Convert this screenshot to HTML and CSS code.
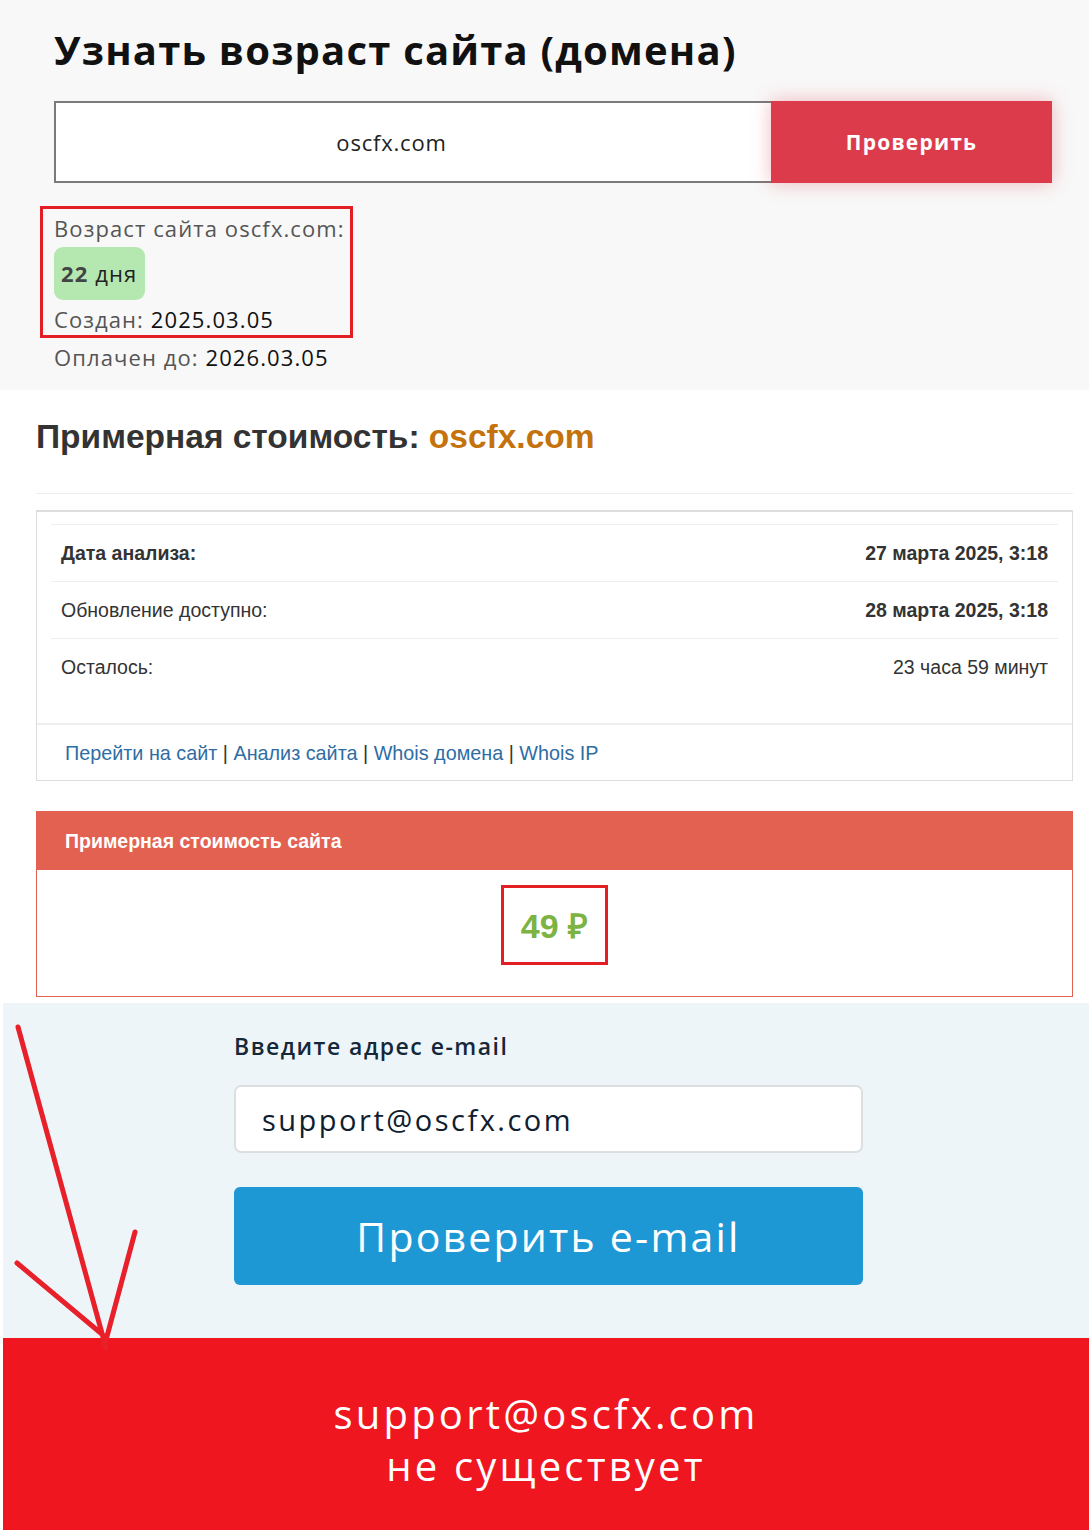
FILE: index.html
```html
<!DOCTYPE html>
<html lang="ru">
<head>
    <meta charset="UTF-8">
    <meta name="viewport" content="width=device-width, initial-scale=1.0">
    <title>Возраст сайта oscfx.com</title>
    <link rel="stylesheet" href="styles.css">
</head>
<body>
    <section class="age">
        <h1>Узнать возраст сайта (домена)</h1>
        <div class="check-form">
            <div class="domain-input">oscfx.com</div>
            <button class="check-btn">Проверить</button>
        </div>
        <div class="result mark">
            <p>Возраст сайта oscfx.com:</p>
            <div class="badge"><b>22</b> дня</div>
            <p>Создан: <span class="val">2025.03.05</span></p>
        </div>
        <p class="paid">Оплачен до: <span class="val">2026.03.05</span></p>
    </section>

    <section class="price">
        <h2>Примерная стоимость: <span class="domain">oscfx.com</span></h2>
        <hr>
        <div class="panel">
            <div class="panel-body">
                <table class="info">
                    <tr class="strong">
                        <td>Дата анализа:</td>
                        <td class="right">27 марта 2025, 3:18</td>
                    </tr>
                    <tr>
                        <td>Обновление доступно:</td>
                        <td class="right"><b>28 марта 2025, 3:18</b></td>
                    </tr>
                    <tr>
                        <td>Осталось:</td>
                        <td class="right">23 часа 59 минут</td>
                    </tr>
                </table>
            </div>
            <div class="panel-footer">
                <a href="#">Перейти на сайт</a> | <a href="#">Анализ сайта</a> | <a href="#">Whois домена</a> | <a href="#">Whois IP</a>
            </div>
        </div>

        <div class="panel panel-red">
            <div class="panel-heading">Примерная стоимость сайта</div>
            <div class="panel-price">
                <div class="cost mark">49 ₽</div>
            </div>
        </div>
    </section>

    <section class="email">
        <div class="email-form">
            <label>Введите адрес e-mail</label>
            <div class="email-input">support@oscfx.com</div>
            <button class="email-btn">Проверить e-mail</button>
        </div>
    </section>

    <section class="alert">
        <p>support@oscfx.com</p>
        <p>не существует</p>
    </section>

    <svg class="arrow" width="160" height="360" viewBox="0 0 160 360">
        <path d="M18 19 L106 340 M17 255 L103 327 M135 224 L106 332" fill="none" stroke="#e8202a" stroke-width="5" stroke-linecap="round"/>
    </svg>
</body>
</html>
```

FILE: styles.css
```css
body {
    margin: 0;
    padding: 0;
    background: #ffffff;
    font-family: 'Open Sans', 'Liberation Sans', sans-serif;
    position: relative;
}

p {
    margin: 0;
}

/* --- возраст домена --- */

.age {
    background: #f8f8f8;
    padding: 22px 0 19px 54px;
}

.age h1 {
    margin: 0;
    font-size: 40px;
    font-weight: 700;
    color: #111;
    line-height: 56px;
    letter-spacing: 1.2px;
}

.check-form {
    display: flex;
    margin-top: 23px;
    width: 998px;
}

.domain-input {
    width: 671px;
    height: 78px;
    border: 2px solid #7a7a7a;
    border-right: none;
    padding-right: 44px;
    background: #fff;
    display: flex;
    align-items: center;
    justify-content: center;
    font-size: 22px;
    color: #222;
    letter-spacing: 0.8px;
}

.check-btn {
    width: 281px;
    height: 82px;
    border: none;
    background: #dc3b4b;
    color: #fff;
    font-family: 'Open Sans', sans-serif;
    font-size: 21px;
    font-weight: 700;
    letter-spacing: 1.2px;
    box-shadow: 0 0 18px rgba(220, 59, 75, 0.35);
}

.mark {
    border: 3px solid #e31e24;
}

.result {
    width: fit-content;
    margin: 23px 0 0 -14px;
    padding: 5px 5px 2px 11px;
    font-size: 22px;
    color: #555;
    line-height: 28px;
    letter-spacing: 1.1px;
}

.badge {
    width: fit-content;
    background: #b5e8b0;
    border-radius: 9px;
    padding: 10px 8px 11px 7px;
    margin: 5px 0;
    color: #222;
    line-height: 32px;
}

.badge b {
    color: #444;
}

.val {
    color: #111;
}

.paid {
    margin-top: 5px;
    font-size: 22px;
    color: #555;
    line-height: 28px;
    letter-spacing: 1.1px;
}

/* --- стоимость --- */

.price {
    font-family: 'Liberation Sans', Arial, sans-serif;
    padding: 0 16px 6px 36px;
}

.price h2 {
    margin: 0;
    padding-top: 19px;
    font-size: 33.5px;
    line-height: 56px;
    color: #333;
}

.price .domain {
    color: #c4720c;
}

.price hr {
    border: none;
    border-top: 1px solid #eee;
    margin: 28px 0 16px;
}

.panel {
    border: 1px solid #ddd;
    border-top: 2px solid #ddd;
    background: #fff;
}

.panel-body {
    padding: 12px 14px 28px;
}

.info {
    width: 100%;
    border-collapse: collapse;
    font-size: 19.5px;
    color: #333;
}

.info td {
    border-top: 1px solid #eee;
    height: 56px;
    padding: 0 10px;
}

.info .right {
    text-align: right;
}

.info .strong td {
    font-weight: 700;
}

.panel-footer {
    border-top: 2px solid #eee;
    padding: 16px 28px 15px;
    font-size: 19.8px;
    color: #333;
    line-height: 24px;
}

.panel-footer a {
    color: #2e6da4;
    text-decoration: none;
}

.panel-red {
    margin-top: 30px;
    border: 1px solid #e36150;
}

.panel-heading {
    background: #e36150;
    color: #fff;
    font-weight: 700;
    font-size: 19.5px;
    height: 58px;
    line-height: 58px;
    padding-left: 28px;
}

.panel-price {
    display: flex;
    justify-content: center;
    padding: 15px 0 31px;
}

.cost {
    width: 101px;
    height: 74px;
    display: flex;
    align-items: center;
    justify-content: center;
    color: #7cb342;
    font-size: 34px;
    font-weight: 700;
}

/* --- проверка e-mail --- */

.email {
    background: #eef5f9;
    margin-left: 3px;
    padding: 28px 0 53px;
}

.email-form {
    margin-left: 231px;
    width: 629px;
    display: flex;
    flex-direction: column;
}

.email-form label {
    font-size: 23px;
    font-weight: 600;
    color: #15283a;
    line-height: 30px;
    letter-spacing: 1.5px;
}

.email-input {
    margin-top: 24px;
    height: 64px;
    border: 2px solid #dcdfe2;
    border-radius: 7px;
    background: #fff;
    display: flex;
    align-items: center;
    padding-left: 26px;
    font-size: 29px;
    color: #0e2030;
    letter-spacing: 2.5px;
}

.email-btn {
    margin-top: 34px;
    height: 98px;
    border: none;
    border-radius: 6px;
    background: #1e98d5;
    color: #fff;
    font-family: 'Open Sans', sans-serif;
    font-size: 41px;
    letter-spacing: 2.2px;
}

.alert {
    background: #ef1620;
    margin-left: 3px;
    padding: 50px 0 38px;
    text-align: center;
    color: #fff;
    font-size: 40px;
    line-height: 52px;
    letter-spacing: 3.2px;
}

.arrow {
    position: absolute;
    left: 0;
    top: 1008px;
}
```
